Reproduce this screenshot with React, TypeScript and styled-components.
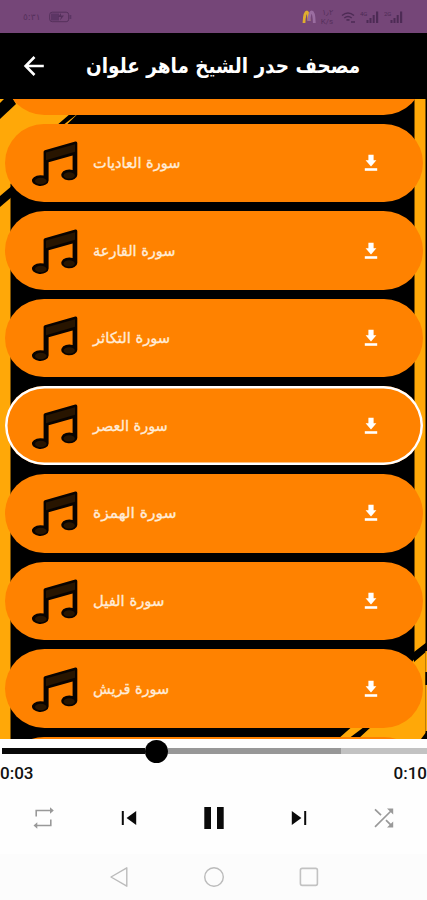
import React from 'react';
import styled, { createGlobalStyle, css } from 'styled-components';

const GlobalStyle = createGlobalStyle`
  *, *::before, *::after { box-sizing: border-box; }
  html, body { margin: 0; padding: 0; background: #fff; }
  svg { display: block; }
`;

const Screen = styled.div`
  width: 427px;
  height: 900px;
  display: flex;
  flex-direction: column;
  overflow: hidden;
  background: #fff;
  font-family: Roboto, 'DejaVu Sans', sans-serif;
`;

const StatusBar = styled.div`
  flex: 0 0 33px;
  display: flex;
  align-items: center;
  justify-content: space-between;
  padding: 0 23px;
  background: #754678;
  color: #55305c;
`;

const StatusGroup = styled.div<{ $gap: number }>`
  display: flex;
  align-items: center;
  gap: ${(p) => p.$gap}px;
`;

const Clock = styled.span`
  width: 20px;
  font: 9px/12px 'DejaVu Sans', sans-serif;
  white-space: nowrap;
`;

const NetSpeed = styled.div`
  width: 14px;
  font: 8px/9px Roboto, sans-serif;
  text-align: center;
  margin-right: 3px;
`;

const Header = styled.header`
  flex: 0 0 65.5px;
  display: flex;
  align-items: center;
  justify-content: space-between;
  padding: 0 67px 0 22px;
  background: #000;
`;

const IconButton = styled.button`
  display: flex;
  align-items: center;
  justify-content: center;
  padding: 0;
  border: 0;
  background: none;
`;

const TitleSlot = styled.div`
  width: 274px;
  display: flex;
  justify-content: center;
`;

const Title = styled.h1<{ $scale: number }>`
  margin: 0;
  flex: none;
  direction: rtl;
  color: #fff;
  font: bold 21px/30px 'DejaVu Sans', sans-serif;
  white-space: nowrap;
  transform: scaleX(${(p) => p.$scale});
`;

const ListArea = styled.main`
  flex: 0 0 640px;
  position: relative;
  overflow: hidden;
  background: #000;
`;

const Backdrop = styled.svg`
  position: absolute;
  inset: 0;
`;

const Tracks = styled.div`
  position: relative;
  display: flex;
  flex-direction: column;
  gap: 9px;
  padding: 0 4.5px 0 5.3px;
  margin-top: -62.4px;
`;

const Track = styled.div<{ $active?: boolean }>`
  flex: 0 0 78.6px;
  display: flex;
  align-items: center;
  padding: 0 45px 0 26.3px;
  border-radius: 40px;
  background: #ff8200;
  ${(p) =>
    p.$active &&
    css`
      box-shadow: inset 0 0 0 2.5px #fff;
    `}
`;

const TrackName = styled.span<{ $scale: number }>`
  flex: 1;
  margin-left: 15.5px;
  direction: rtl;
  text-align: left;
  color: #ffecd8;
  font: 15px/22px 'DejaVu Sans', sans-serif;
  -webkit-text-stroke: 0.35px #ffecd8;
  white-space: nowrap;
  transform-origin: left center;
  transform: scaleX(${(p) => p.$scale});
`;

const Player = styled.section`
  flex: 0 0 115px;
  background: #fefefe;
`;

const Slider = styled.div`
  height: 25px;
  display: flex;
  align-items: center;
  padding-left: 2px;
`;

const Segment = styled.div<{ $width: number; $color: string }>`
  flex: 0 0 ${(p) => p.$width}px;
  height: 5.5px;
  background: ${(p) => p.$color};
`;

const Thumb = styled.div`
  flex: 0 0 23px;
  height: 23px;
  border-radius: 50%;
  background: #000;
`;

const Times = styled.div`
  display: flex;
  justify-content: space-between;
  height: 19px;
  color: #111;
  font: 500 17px/19px Roboto, sans-serif;
`;

const Controls = styled.div`
  display: grid;
  grid-template-columns: repeat(5, 1fr);
  height: 70px;
  padding-left: 1px;
`;

const NavBar = styled.nav`
  flex: 1;
  display: flex;
  align-items: center;
  justify-content: center;
  gap: 71px;
  background: #fcfcfc;
`;

const NoteSlot = styled.div`
  padding-top: 4px;
`;

const MusicNote = () => (
  <svg width="46" height="48" viewBox="0 0 46 48">
    <path
      d="M11.6 10.7 Q11.6 9.7 12.8 9.2 L43.3 .5 Q45.3 0 45.3 2.2 V34 A8 5.4 0 1 1 40.6 29 V14.4 L16.6 21.3 V39.5 A8.3 5.4 0 1 1 11.6 34.6 Z"
      fill="#080300"
    />
    <path d="M14 11.5 L43 3.2 V10.8 L14 19.2 Z" fill="#281500" />
    <ellipse cx="8.8" cy="40" rx="5.8" ry="3.2" fill="#281500" />
    <ellipse cx="37.2" cy="34.4" rx="5.6" ry="3.2" fill="#281500" />
  </svg>
);

const DownloadIcon = () => (
  <svg width="14" height="18" viewBox="0 0 14 18" fill="#fff">
    <path d="M4.4 0.8h5.2v5.4h2.8L7 12.4 1.6 6.2h2.8z" />
    <path d="M.8 14.2h12.4v2.6H.8z" />
  </svg>
);

const SignalIcon = ({ label }: { label: string }) => (
  <svg width="20" height="14" viewBox="0 0 20 14" fill="#4d2b55">
    <text x="0" y="6" fontSize="6" fontFamily="Roboto, sans-serif">
      {label}
    </text>
    <path d="M6.5 10h2v3h-2zM9.5 8h2v5h-2zM12.7 5h2v8h-2zM16 1.5h2.2V13H16z" />
  </svg>
);

const tracks = [
  { name: '', scale: 1 },
  { name: 'سورة العاديات', scale: 0.967 },
  { name: 'سورة القارعة', scale: 0.967 },
  { name: 'سورة التكاثر', scale: 0.98 },
  { name: 'سورة العصر', scale: 0.965, active: true },
  { name: 'سورة الهمزة', scale: 1.035 },
  { name: 'سورة الفيل', scale: 0.985 },
  { name: 'سورة قريش', scale: 0.965 },
  { name: '', scale: 1 },
];

export default function App() {
  return (
    <Screen>
      <GlobalStyle />
      <StatusBar>
        <StatusGroup $gap={6}>
          <Clock>٥:٣١</Clock>
          <svg width="23" height="12" viewBox="0 0 23 12">
            <rect x=".7" y="1.2" width="19" height="9.5" rx="2.5" fill="none" stroke="#55305c" />
            <path d="M2 2.5h8v7H2zM20.5 4h1.8v4h-1.8z" fill="#5c3564" />
            <path d="M12 2l-3 4h3l-1 3.5 4-5h-3z" fill="#55305c" />
          </svg>
        </StatusGroup>
        <StatusGroup $gap={4}>
          <svg width="14" height="14" viewBox="0 0 14 14" fill="none" strokeWidth="2.8">
            <path d="M2 13 C2.2 6 3.5 2 5 2 C6.2 2 6.7 6 7 11" stroke="#dfae2e" />
            <path d="M7 11 C7.2 5 8.4 2 9.7 2 C11.3 2 12.2 7 12.3 13" stroke="#9a6da0" />
          </svg>
          <NetSpeed>
            ١٫٢
            <br />
            K/s
          </NetSpeed>
          <svg width="15" height="14" viewBox="0 0 15 14" fill="none" stroke="#4d2b55" strokeWidth="1.5">
            <path d="M1 5.5 Q7 .5 13 5.5M3.3 8 Q7 5 10.7 8M5.5 10.4 Q7 9 8.5 10.4" />
            <path d="M10 12h4" />
          </svg>
          <SignalIcon label="4G" />
          <SignalIcon label="2G" />
        </StatusGroup>
      </StatusBar>

      <Header>
        <IconButton aria-label="Back">
          <svg width="24" height="24" viewBox="0 0 24 24" fill="none" stroke="#fff" strokeWidth="2.6">
            <path d="M21.8 12H4M12.5 3L3.6 12l8.9 9" />
          </svg>
        </IconButton>
        <TitleSlot>
          <Title $scale={0.878}>مصحف حدر الشيخ ماهر علوان</Title>
        </TitleSlot>
      </Header>

      <ListArea>
        <Backdrop width="427" height="640" viewBox="0 0 427 640" fill="#ffa808">
          <path d="M0 0H93L52 40 10.5 85V640H0z" />
          <path d="M4 0H13L16 5 0 20V4z" fill="#000" />
          <path d="M0 97L20 80V91L0 108z" fill="#000" />
          <path d="M56 27L70.5 14.5H78L62 27zM74 27L89 14.5H200V27z" fill="#000" />
          <path d="M414.5 0H425.5V640H338L372 610 414.5 560z" />
          <path d="M414 553L427 543V552L414 563zM348 640L364 628H371L358 640zM425.5 573H427V586H425.5zM421 640L427 632V640z" fill="#000" />
          <path d="M425.5 552H427V573H425.5zM425.5 586H427V632H425.5z" />
        </Backdrop>
        <Tracks>
          {tracks.map((t, i) => (
            <Track key={i} $active={t.active}>
              {t.name && (
                <>
                  <NoteSlot>
                    <MusicNote />
                  </NoteSlot>
                  <TrackName $scale={t.scale}>{t.name}</TrackName>
                  <IconButton aria-label="Download">
                    <DownloadIcon />
                  </IconButton>
                </>
              )}
            </Track>
          ))}
        </Tracks>
      </ListArea>

      <Player>
        <Slider>
          <Segment $width={143.3} $color="#080808" />
          <Thumb />
          <Segment $width={173} $color="#979797" />
          <Segment $width={86} $color="#c2c2c2" />
        </Slider>
        <Times>
          <span>0:03</span>
          <span>0:10</span>
        </Times>
        <Controls>
          <IconButton aria-label="Repeat">
            <svg width="22" height="24" viewBox="0 0 22 24" fill="none" stroke="#999" strokeWidth="1.6">
              <path d="M3.2 10.5V4.5H18.5M17.8 13.5V19.5H2.5" />
              <path d="M17 1.3l3.8 3.2L17 7.7zM4.3 16.3L.5 19.5l3.8 3.2z" fill="#999" stroke="none" />
            </svg>
          </IconButton>
          <IconButton aria-label="Previous">
            <svg width="16" height="16" viewBox="0 0 16 16" fill="#0a0a0a">
              <path d="M.8 1h2v14h-2zM15.2 1v14L5.6 8z" />
            </svg>
          </IconButton>
          <IconButton aria-label="Pause">
            <svg width="20" height="22" viewBox="0 0 20 22" fill="#0a0a0a">
              <path d="M.3 0h6.7v22H.3zM13 0h6.7v22H13z" />
            </svg>
          </IconButton>
          <IconButton aria-label="Next">
            <svg width="16" height="16" viewBox="0 0 16 16" fill="#0a0a0a">
              <path d="M13.2 1h2v14h-2zM.8 1v14L10.4 8z" />
            </svg>
          </IconButton>
          <IconButton aria-label="Shuffle">
            <svg width="20" height="20" viewBox="0 0 20 20" fill="none" stroke="#999" strokeWidth="1.7">
              <path d="M1 18.8L17 3M1 1.4l6 5.8M12 12.2l5 5" />
              <path d="M13 .6h6.2v6zM13 19.4h6.2v-6z" fill="#999" stroke="none" />
            </svg>
          </IconButton>
        </Controls>
      </Player>

      <NavBar>
        <svg width="24" height="24" viewBox="0 0 24 24" fill="none" stroke="#bbb" strokeWidth="1.4">
          <path d="M4 12L19.8 2.8V21.2z" strokeLinejoin="round" />
        </svg>
        <svg width="24" height="24" viewBox="0 0 24 24" fill="none" stroke="#bbb" strokeWidth="1.4">
          <circle cx="12" cy="12" r="9.3" />
        </svg>
        <svg width="24" height="24" viewBox="0 0 24 24" fill="none" stroke="#c2c2c2" strokeWidth="1.6">
          <rect x="3.4" y="3.4" width="17" height="17" rx="1.8" />
        </svg>
      </NavBar>
    </Screen>
  );
}
